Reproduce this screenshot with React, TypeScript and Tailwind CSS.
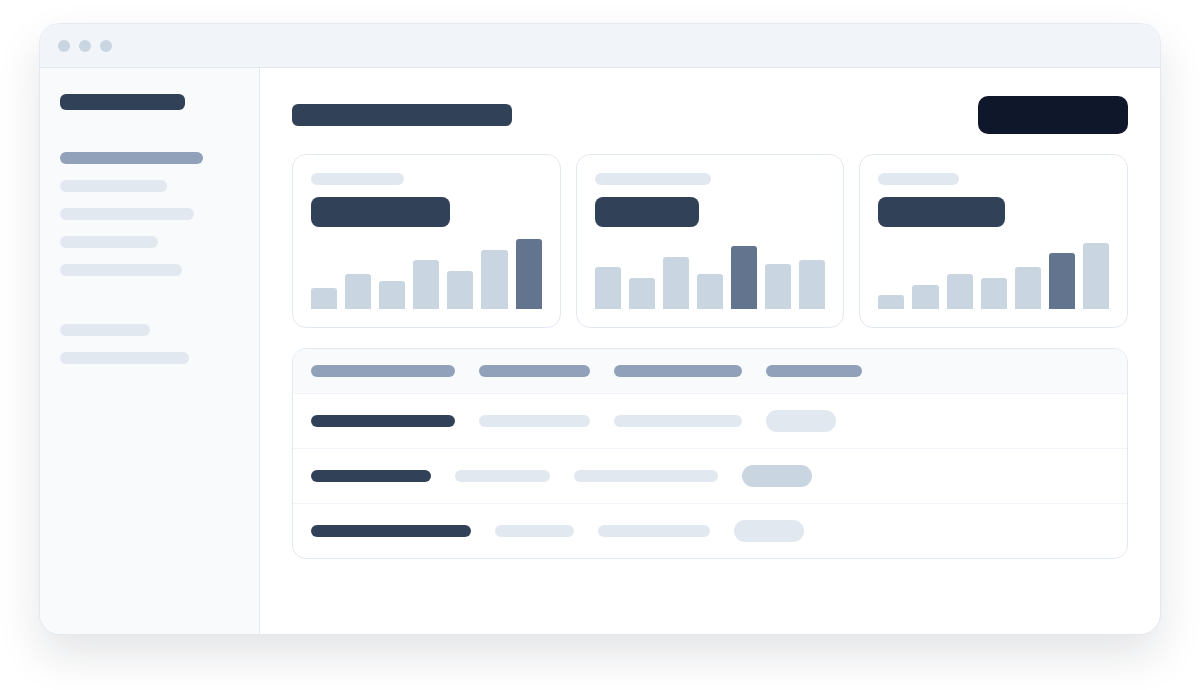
import React from "react";

type Card = { label: string; value: string; bars: number[]; dark: number };

const cards: Card[] = [
  { label: "w-[93px]", value: "w-[139px]", bars: [21, 35, 28, 49, 38, 59, 70], dark: 6 },
  { label: "w-[116px]", value: "w-[104px]", bars: [42, 31, 52, 35, 63, 45, 49], dark: 4 },
  { label: "w-[81px]", value: "w-[127px]", bars: [14, 24, 35, 31, 42, 56, 66], dark: 5 },
];

// rows of the table: widths of each cell bar
const rows = [
  { a: "w-[144px]", b: "w-[111px]", c: "w-[128px]", pill: "bg-slate-200" },
  { a: "w-[120px]", b: "w-[95px]", c: "w-[144px]", pill: "bg-slate-300" },
  { a: "w-[160px]", b: "w-[79px]", c: "w-[112px]", pill: "bg-slate-200" },
];

const StatCard = ({ card }: { card: Card }) => (
  <div className="rounded-[14px] border border-slate-200 bg-white p-[18px]">
    <div className={`h-3 rounded-full bg-slate-200 ${card.label}`} />
    <div className={`mt-3 h-[30px] rounded-lg bg-slate-700 ${card.value}`} />
    <div className="mt-3 flex h-[70px] items-end gap-2">
      {card.bars.map((h, i) => (
        <div
          key={i}
          className={`flex-1 rounded-t-[3px] ${i === card.dark ? "bg-slate-500" : "bg-slate-300"}`}
          style={{ height: h }}
        />
      ))}
    </div>
  </div>
);

export default function App() {
  return (
    <div className="min-h-screen bg-white px-10 pt-6">
      <div className="flex h-[610px] flex-col overflow-hidden rounded-[20px] bg-white shadow-[0_0_0_1px_rgba(226,232,240,0.9),0_20px_45px_rgba(15,23,42,0.12)]">
        {/* title bar */}
        <div className="flex h-[44px] shrink-0 items-center gap-[9px] border-b border-slate-200 bg-slate-100 pl-[18px]">
          <span className="h-3 w-3 rounded-full bg-slate-300" />
          <span className="h-3 w-3 rounded-full bg-slate-300" />
          <span className="h-3 w-3 rounded-full bg-slate-300" />
        </div>

        <div className="flex flex-1">
          {/* sidebar */}
          <aside className="w-[220px] shrink-0 border-r border-slate-200 bg-slate-50 px-5 pt-[26px]">
            <div className="h-4 w-[125px] rounded-md bg-slate-700" />
            <div className="mt-[42px] flex flex-col gap-4">
              <div className="h-3 w-[143px] rounded-full bg-slate-400" />
              <div className="h-3 w-[107px] rounded-full bg-slate-200" />
              <div className="h-3 w-[134px] rounded-full bg-slate-200" />
              <div className="h-3 w-[98px] rounded-full bg-slate-200" />
              <div className="h-3 w-[122px] rounded-full bg-slate-200" />
            </div>
            <div className="mt-12 flex flex-col gap-4">
              <div className="h-3 w-[90px] rounded-full bg-slate-200" />
              <div className="h-3 w-[129px] rounded-full bg-slate-200" />
            </div>
          </aside>

          {/* main */}
          <main className="flex-1 px-8 pt-7">
            <div className="flex items-center justify-between">
              <div className="h-[22px] w-[220px] rounded-md bg-slate-700" />
              <button className="h-[38px] w-[150px] rounded-[10px] bg-slate-900" />
            </div>

            <div className="mt-5 grid grid-cols-3 gap-[15px]">
              {cards.map((c, i) => (
                <StatCard key={i} card={c} />
              ))}
            </div>

            <div className="mt-5 overflow-hidden rounded-[14px] border border-slate-200">
              <div className="flex h-[45px] items-center gap-6 border-b border-slate-100 bg-slate-50 px-[18px]">
                <div className="h-3 w-[144px] rounded-full bg-slate-400" />
                <div className="h-3 w-[111px] rounded-full bg-slate-400" />
                <div className="h-3 w-[128px] rounded-full bg-slate-400" />
                <div className="h-3 w-[96px] rounded-full bg-slate-400" />
              </div>
              {rows.map((r, i) => (
                <div
                  key={i}
                  className={`flex items-center gap-6 px-[18px] ${i < rows.length - 1 ? "h-[55px] border-b border-slate-100" : "h-[54px]"}`}
                >
                  <div className={`h-3 rounded-full bg-slate-700 ${r.a}`} />
                  <div className={`h-3 rounded-full bg-slate-200 ${r.b}`} />
                  <div className={`h-3 rounded-full bg-slate-200 ${r.c}`} />
                  <div className={`h-[22px] w-[70px] rounded-full ${r.pill}`} />
                </div>
              ))}
            </div>
          </main>
        </div>
      </div>
    </div>
  );
}
